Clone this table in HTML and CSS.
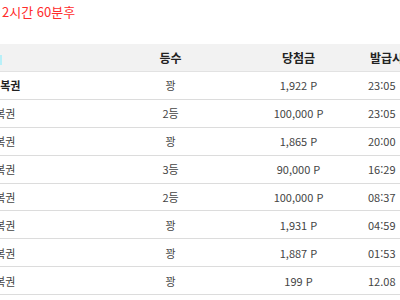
FILE: index.html
```html
<!DOCTYPE html>
<html lang="ko">
<head>
    <meta charset="UTF-8">
    <title>당첨 내역</title>
    <link rel="stylesheet" href="styles.css">
</head>
<body>
    <div class="timer">2시간 60분후</div>

    <div class="board">
        <table class="history">
            <colgroup>
                <col class="c-name">
                <col class="c-rank">
                <col class="c-prize">
                <col class="c-time">
            </colgroup>
            <thead>
                <tr>
                    <th class="name"><span class="mark"></span></th>
                    <th>등수</th>
                    <th>당첨금</th>
                    <th class="time">발급시간</th>
                </tr>
            </thead>
            <tbody>
                <tr class="mine">
                    <td class="name">즉석복권</td><td>꽝</td><td>1,922 P</td><td class="time">23:05</td>
                </tr>
                <tr>
                    <td class="name">행운복권</td><td>2등</td><td>100,000 P</td><td class="time">23:05</td>
                </tr>
                <tr>
                    <td class="name">행운복권</td><td>꽝</td><td>1,865 P</td><td class="time">20:00</td>
                </tr>
                <tr>
                    <td class="name">행운복권</td><td>3등</td><td>90,000 P</td><td class="time">16:29</td>
                </tr>
                <tr>
                    <td class="name">행운복권</td><td>2등</td><td>100,000 P</td><td class="time">08:37</td>
                </tr>
                <tr>
                    <td class="name">행운복권</td><td>꽝</td><td>1,931 P</td><td class="time">04:59</td>
                </tr>
                <tr>
                    <td class="name">행운복권</td><td>꽝</td><td>1,887 P</td><td class="time">01:53</td>
                </tr>
                <tr>
                    <td class="name">행운복권</td><td>꽝</td><td>199 P</td><td class="time">12.08</td>
                </tr>
            </tbody>
        </table>
    </div>
</body>
</html>
```

FILE: styles.css
```css
html, body {
    margin: 0;
    padding: 0;
    overflow: hidden;
}
body {
    background: #fff;
    color: #444;
    font-family: "Noto Sans CJK KR", "Noto Sans", sans-serif;
    font-size: 11px;
    width: 400px;
}
.timer {
    color: #ff2b2b;
    font-size: 13px;
    line-height: 16px;
    padding: 4px 0 0 2px;
    height: 44px;
    box-sizing: border-box;
}
.board {
    margin-left: -40px;
    width: 500px;
}
.history {
    border-collapse: collapse;
    table-layout: fixed;
    width: 500px;
}
.c-name { width: 140px; }
.c-rank { width: 141px; }
.c-prize { width: 115px; }
.c-time { width: 104px; }
.history th {
    background: #f2f2f2;
    color: #222;
    font-size: 12px;
    font-weight: bold;
    height: 27px;
    padding: 0;
    text-align: center;
    border-bottom: 1px solid #e2e2e2;
}
.history td {
    height: 26.9px;
    padding: 0;
    text-align: center;
    border-bottom: 1px solid #dcdcdc;
}
.history .name {
    text-align: left;
    padding-left: 15px;
}
.history .time {
    text-align: left;
    padding-left: 12px;
}
.history th.time {
    padding-left: 14px;
}
.history th.name {
    padding-left: 0;
}
.mine .name {
    font-weight: bold;
    color: #222;
}
.history .mine .name {
    padding-left: 20px;
}
.mark {
    display: inline-block;
    width: 6px;
    height: 10px;
    margin-left: 36px;
    vertical-align: middle;
    background: #b8f0f8;
}
```
